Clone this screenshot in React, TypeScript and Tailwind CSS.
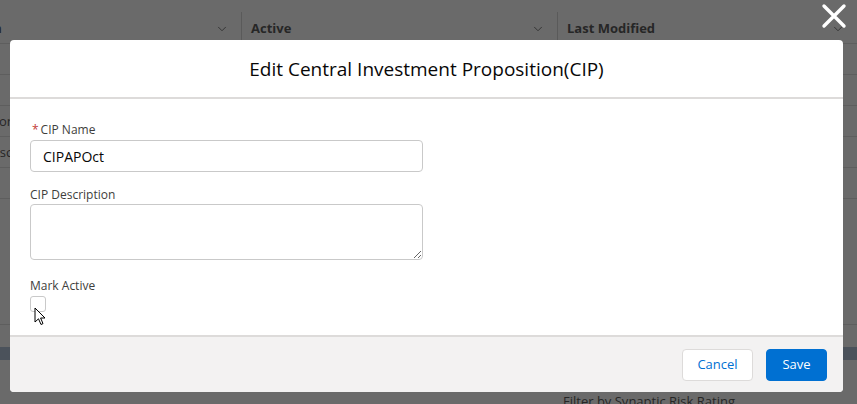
import { ChevronDown } from 'lucide-react'

const font = { fontFamily: '"Segoe UI", "Open Sans", "Noto Sans", sans-serif' }

function HeaderCell({ label, width, first }: { label: string; width: string; first?: boolean }) {
  return (
    <div className={`${width} shrink-0 flex items-center justify-between pr-[12px] pt-[3px] ${first ? 'pl-0' : 'pl-[9px] border-l border-[#5a5a5a]'}`}>
      <span className="text-[13px] font-bold text-[#262626] whitespace-nowrap">{label}</span>
      <ChevronDown size={14} strokeWidth={1.5} className="text-[#2e2e2e]" />
    </div>
  )
}

function BackgroundPage() {
  const rows = ['', '', 'Information', 'Description', '']
  return (
    <div className="h-full w-full bg-[#6a6a6a] pt-[12px]" style={font}>
      <div className="flex h-[32px] border-b border-[#5e5e5e] -ml-[73px]">
        <HeaderCell label="Description" width="w-[314px]" first />
        <HeaderCell label="Active" width="w-[316px]" />
        <HeaderCell label="Last Modified" width="w-[300px]" />
      </div>
      {rows.map((r, i) => (
        <div key={i} className="h-[31px] border-b border-[#5e5e5e] flex items-center text-[13px] text-[#262626] -ml-[17px] pt-[1px] whitespace-nowrap">
          {r}
        </div>
      ))}
      <div className="h-[126px] border-b border-[#5e5e5e]" />
      <div className="mt-[22px] h-[13px] bg-[#4b525b]" />
      <div className="pl-[563px] pt-[35px] text-[13px] text-[#262626] leading-none">Filter by Synaptic Risk Rating</div>
    </div>
  )
}

function Cursor() {
  return (
    <svg width="13" height="20" viewBox="0 0 13 20" className="absolute left-[34px] top-[307px]">
      <path d="M1 1 L1 15 L4.5 11.8 L7 17.5 L9 16.6 L6.6 11 L11 11 Z" fill="#fff" stroke="#000" strokeWidth="1" strokeLinejoin="round" />
    </svg>
  )
}

export default function App() {
  return (
    <div className="relative w-[857px] h-[404px] overflow-hidden" style={font}>
      <BackgroundPage />

      {/* modal layer */}
      <div className="absolute inset-0 px-[10px] pt-[40px]">
        <svg width="26" height="26" viewBox="0 0 26 26" className="absolute left-[821px] top-[3px]">
          <path d="M3 3 L23 23 M23 3 L3 23" stroke="#fff" strokeWidth="3.4" strokeLinecap="round" />
        </svg>

        <div className="w-[833px] bg-white rounded-[4px] overflow-hidden">
          <div className="h-[59px] flex items-center justify-center border-b-2 border-[#dddbda]">
            <h2 className="text-[19px] text-[#080707] leading-none pt-[2px]">Edit Central Investment Proposition(CIP)</h2>
          </div>

          <div className="px-[20px] pt-[22px] h-[236px] relative">
            <label className="block text-[12px] text-[#3e3e3c] leading-[18px]">
              <span className="text-[#c23934] mx-[2px]">*</span>CIP Name
            </label>
            <input
              readOnly
              value="CIPAPOct"
              className="mt-[1px] w-[393px] h-[32px] border border-[#c9c9c9] rounded-[4px] px-[12px] text-[14px] text-[#080707] outline-none"
            />
            <label className="block mt-[14px] text-[12px] text-[#3e3e3c] leading-[18px]">CIP Description</label>
            <textarea
              readOnly
              className="block mt-0 w-[393px] h-[56px] border border-[#c9c9c9] rounded-[4px] px-[12px] outline-none"
            />
            <label className="block mt-[17px] text-[12px] text-[#3e3e3c] leading-[18px]">Mark Active</label>
            <div className="mt-[1px] w-[16px] h-[16px] border border-[#c9c9c9] rounded-[3px] bg-white" />
          </div>

          <div className="border-t-2 border-[#dddbda] bg-[#f3f2f2] h-[57px] flex items-center justify-end gap-[13px] pr-[16px] pt-[1px]">
            <button className="w-[71px] h-[32px] bg-white border border-[#dddbda] rounded-[4px] text-[13px] text-[#0070d2]">Cancel</button>
            <button className="w-[61px] h-[32px] bg-[#0070d2] border border-[#0070d2] rounded-[4px] text-[13px] text-white">Save</button>
          </div>
        </div>
      </div>

      <Cursor />
    </div>
  )
}
